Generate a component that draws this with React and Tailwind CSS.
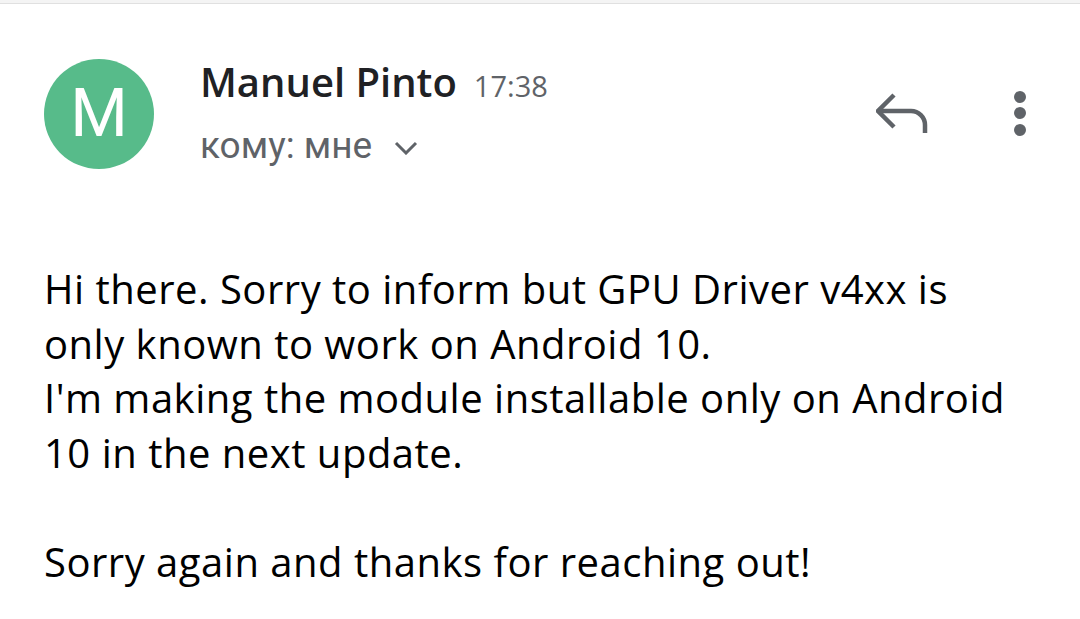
import React from 'react'

const ReplyIcon = () => (
  <svg width="54" height="46" viewBox="0 0 54 46" fill="none" stroke="#5f6368" strokeWidth="4.5">
    <path d="M18 3 L2 19 L18 35" />
    <path d="M3 19 H35 a14 14 0 0 1 14 14 V41" />
  </svg>
)

const MoreIcon = () => (
  <svg width="14" height="48" viewBox="0 0 14 48" fill="#5f6368">
    <circle cx="7" cy="7" r="6" />
    <circle cx="7" cy="23" r="6" />
    <circle cx="7" cy="40" r="6" />
  </svg>
)

const App = () => {
  return (
    <div className="w-[1080px] h-[619px] bg-white overflow-hidden" style={{fontFamily: 'Roboto, "Noto Sans", sans-serif'}}>
      <div className="h-[4px] bg-[#f4f4f4] border-b border-[#e0e0e0]" />
      <div className="flex items-start pt-[55px] pl-[44px] pr-[53px]">
        <div className="w-[110px] h-[110px] rounded-full bg-[#57bb8a] flex items-center justify-center text-white text-[66px] leading-none font-normal">
          M
        </div>
        <div className="ml-[46px] flex flex-col">
          <div className="flex items-baseline leading-[46px] font-['Open_Sans',sans-serif]">
            <span className="text-[40px] font-semibold text-[#202124]">Manuel Pinto</span>
            <span className="ml-[17px] text-[29px] text-[#5f6368]">17:38</span>
          </div>
          <div className="mt-[15px] flex items-center leading-[44px] text-[37px] text-[#5f6368]">
            <span>кому: мне</span>
            <svg className="ml-[22px] mt-[4px]" width="24" height="14" viewBox="0 0 24 14" fill="none" stroke="#5f6368" strokeWidth="3">
              <path d="M2 2 L12 12 L22 2" />
            </svg>
          </div>
        </div>
        <div className="ml-auto flex items-start mt-[33px]">
          <ReplyIcon />
          <div className="ml-[83px] -mt-[2px]">
            <MoreIcon />
          </div>
        </div>
      </div>
      <div className="pl-[44px] mt-[93px] font-['Open_Sans',sans-serif] text-[40px] leading-[54.5px] tracking-[0.5px] text-black whitespace-nowrap">
        Hi there. Sorry to inform but GPU Driver v4xx is
        <br />
        only known to work on Android 10.
        <br />
        I'm making the module installable only on Android
        <br />
        10 in the next update.
        <br />
        <br />
        Sorry again and thanks for reaching out!
      </div>
    </div>
  )
}

export default App
